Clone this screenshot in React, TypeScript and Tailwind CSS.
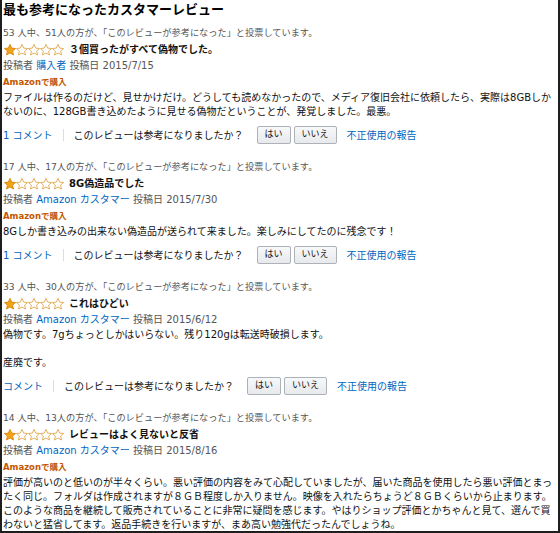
import React from "react";

type Review = {
  helpful: string;
  title: string;
  author: string;
  authorIsLink: boolean;
  date: string;
  amazon: boolean;
  body: string[];
  comment: string;
  showActions: boolean;
};

const reviews: Review[] = [
  {
    helpful: "53 人中、51人の方が、「このレビューが参考になった」と投票しています。",
    title: "３個買ったがすべて偽物でした。",
    author: "購入者",
    authorIsLink: true,
    date: "2015/7/15",
    amazon: true,
    body: [
      "ファイルは作るのだけど、見せかけだけ。どうしても読めなかったので、メディア復旧会社に依頼したら、実際は8GBしか",
      "ないのに、128GB書き込めたように見せる偽物だということが、発覚しました。最悪。",
    ],
    comment: "1 コメント",
    showActions: true,
  },
  {
    helpful: "17 人中、17人の方が、「このレビューが参考になった」と投票しています。",
    title: "8G偽造品でした",
    author: "Amazon カスタマー",
    authorIsLink: true,
    date: "2015/7/30",
    amazon: true,
    body: ["8Gしか書き込みの出来ない偽造品が送られて来ました。楽しみにしてたのに残念です！"],
    comment: "1 コメント",
    showActions: true,
  },
  {
    helpful: "33 人中、30人の方が、「このレビューが参考になった」と投票しています。",
    title: "これはひどい",
    author: "Amazon カスタマー",
    authorIsLink: true,
    date: "2015/6/12",
    amazon: false,
    body: ["偽物です。7gちょっとしかはいらない。残り120gは転送時破損します。", "", "産廃です。"],
    comment: "コメント",
    showActions: true,
  },
  {
    helpful: "14 人中、13人の方が、「このレビューが参考になった」と投票しています。",
    title: "レビューはよく見ないと反省",
    author: "Amazon カスタマー",
    authorIsLink: true,
    date: "2015/8/16",
    amazon: true,
    body: [
      "評価が高いのと低いのが半々くらい。悪い評価の内容をみて心配していましたが、届いた商品を使用したら悪い評価とまっ",
      "たく同じ。フォルダは作成されますが８ＧＢ程度しか入りません。映像を入れたらちょうど８ＧＢくらいから止まります。",
      "このような商品を継続して販売されていることに非常に疑問を感じます。やはりショップ評価とかちゃんと見て、選んで買",
      "わないと猛省してます。返品手続きを行いますが、まあ高い勉強代だったんでしょうね。",
    ],
    comment: "",
    showActions: false,
  },
];

const STAR = "6,0.4 7.7,4.1 11.6,4.5 8.6,7.1 9.5,11 6,9 2.5,11 3.4,7.1 0.4,4.5 4.3,4.1";

function Stars() {
  return (
    <div className="flex items-center">
      {[0, 1, 2, 3, 4].map((i) => (
        <svg key={i} width="12" height="12" viewBox="0 0 12 12">
          <polygon
            points={STAR}
            fill={i === 0 ? "#f3a31a" : "#ffffff"}
            stroke={i === 0 ? "#d58a0c" : "#dfa84c"}
            strokeWidth="0.9"
            strokeLinejoin="round"
          />
        </svg>
      ))}
    </div>
  );
}

function ReviewBlock({ review, first }: { review: Review; first: boolean }) {
  return (
    <div className={first ? "" : "pt-[13px]"}>
      <div className="h-4 leading-4 text-[9.2px] text-[#555] whitespace-nowrap">{review.helpful}</div>
      <div className="h-[17px] flex items-center gap-[5px] pl-[1px]">
        <Stars />
        <span className="text-[10px] font-bold text-[#111] whitespace-nowrap">{review.title}</span>
      </div>
      <div className="h-4 leading-4 text-[10px] text-[#555] whitespace-nowrap">
        投稿者{" "}
        <span className={review.authorIsLink ? "text-[#0066c0]" : ""}>{review.author}</span>{" "}
        投稿日 {review.date}
      </div>
      {review.amazon && (
        <div className="h-[17px] leading-[17px] text-[8.5px] font-bold text-[#c45500]">Amazonで購入</div>
      )}
      <div className="text-[10px] leading-[14px] text-[#111]">
        {review.body.map((line, i) => (
          <div key={i} className="h-[14px] whitespace-nowrap">
            {line}
          </div>
        ))}
      </div>
      {review.showActions && (
        <div className="mt-[5px] h-[22px] flex items-center text-[10px] whitespace-nowrap">
          <span className="text-[#0066c0]">{review.comment}</span>
          <span className="mx-[10px] w-px h-[12px] bg-[#ddd]" />
          <span className="text-[#111]">このレビューは参考になりましたか？</span>
          <div className="ml-[13px] flex gap-[3px]">
            <button className="h-[18px] px-[7px] text-[9px] text-[#111] border border-[#adb1b8] rounded-[2px] bg-gradient-to-b from-[#f7f8fa] to-[#e7e9ec]">
              はい
            </button>
            <button className="h-[18px] px-[7px] text-[9px] text-[#111] border border-[#adb1b8] rounded-[2px] bg-gradient-to-b from-[#f7f8fa] to-[#e7e9ec]">
              いいえ
            </button>
          </div>
          <span className="ml-[10px] text-[#0066c0]">不正使用の報告</span>
        </div>
      )}
    </div>
  );
}

export default function App() {
  return (
    <div
      className="w-[560px] h-[533px] overflow-hidden bg-white border-x-2 border-b-2 border-[#1e1e1e] pl-[1px]"
      style={{ fontFamily: '"DejaVu Sans", "Noto Sans CJK JP", sans-serif' }}
    >
      <h1 className="h-[25px] pt-[1px] leading-[18px] text-[13px] font-bold text-black whitespace-nowrap">
        最も参考になったカスタマーレビュー
      </h1>
      {reviews.map((r, i) => (
        <ReviewBlock key={i} review={r} first={i === 0} />
      ))}
    </div>
  );
}
